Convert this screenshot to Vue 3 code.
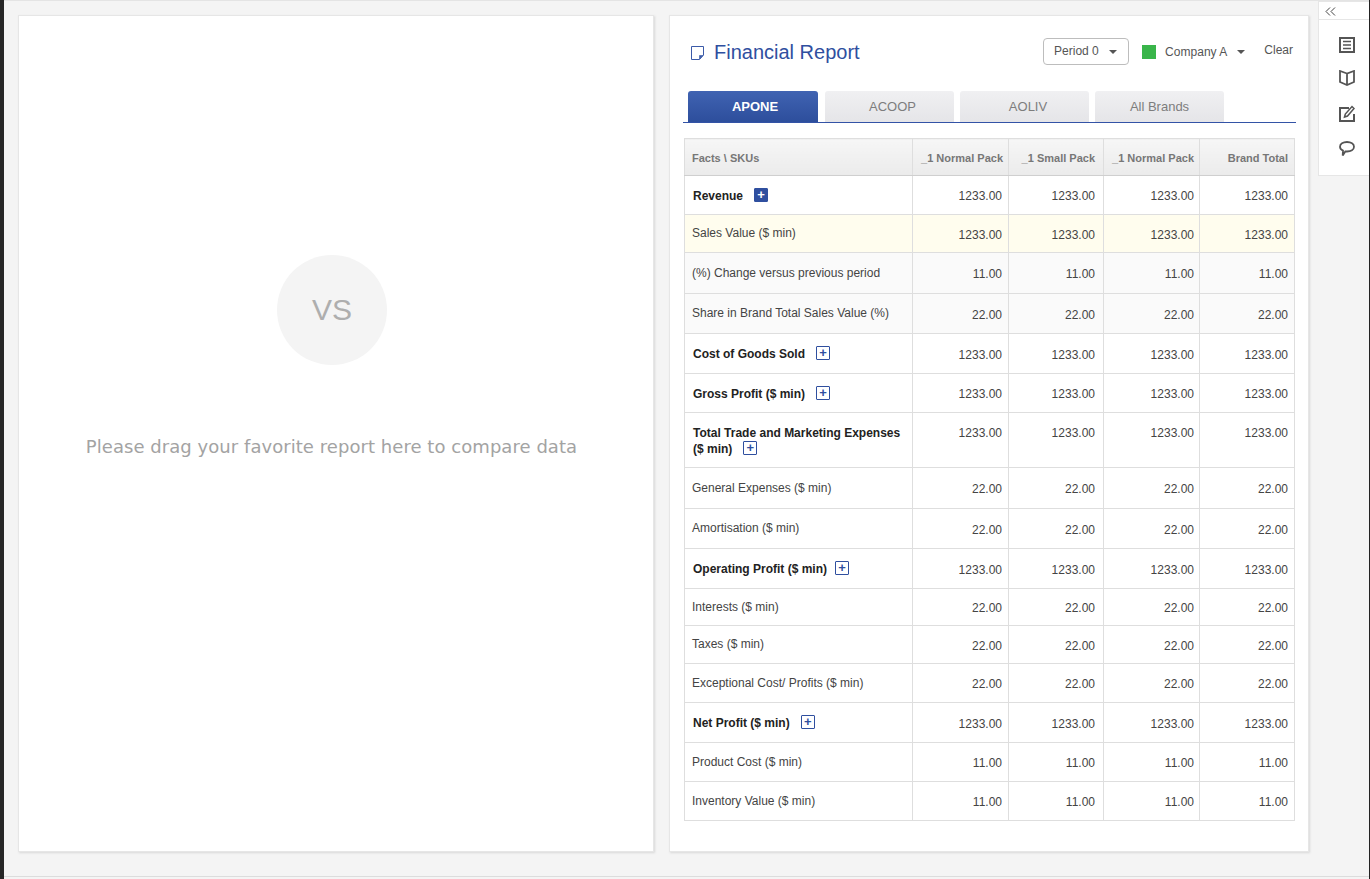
<script setup>
const cols = ['_1 Normal Pack', '_1 Small Pack', '_1 Normal Pack', 'Brand Total']
const tabs = ['APONE', 'ACOOP', 'AOLIV', 'All Brands']
const rows = [
  { label: 'Revenue', v: '1233.00', h: 39, bold: true, plus: 'solid' },
  { label: 'Sales Value ($ min)', v: '1233.00', h: 38, tone: 'hl' },
  { label: '(%) Change versus previous period', v: '11.00', h: 41, tone: 'soft' },
  { label: 'Share in Brand Total Sales Value (%)', v: '22.00', h: 40, tone: 'soft' },
  { label: 'Cost of Goods Sold', v: '1233.00', h: 40, bold: true, plus: 'line' },
  { label: 'Gross Profit ($ min)', v: '1233.00', h: 39, bold: true, plus: 'line' },
  { label: 'Total Trade and Marketing Expenses ($ min)', v: '1233.00', h: 55, bold: true, plus: 'line', top: true },
  { label: 'General Expenses ($ min)', v: '22.00', h: 41 },
  { label: 'Amortisation ($ min)', v: '22.00', h: 40 },
  { label: 'Operating Profit ($ min)', v: '1233.00', h: 40, bold: true, plus: 'line tight' },
  { label: 'Interests ($ min)', v: '22.00', h: 37 },
  { label: 'Taxes ($ min)', v: '22.00', h: 38 },
  { label: 'Exceptional Cost/ Profits ($ min)', v: '22.00', h: 39 },
  { label: 'Net Profit ($ min)', v: '1233.00', h: 40, bold: true, plus: 'line' },
  { label: 'Product Cost ($ min)', v: '11.00', h: 39 },
  { label: 'Inventory Value ($ min)', v: '11.00', h: 39 }
]
</script>

<template>
  <div class="page">
    <section class="card compare">
      <div class="vs">VS</div>
      <p class="hint">Please drag your favorite report here to compare data</p>
    </section>

    <section class="card report">
      <header class="head">
        <svg class="doc" width="13" height="14" viewBox="0 0 13 14" fill="none" stroke="#3b5aa8" stroke-width="1">
          <path d="M.5.500h12v8.500l-4 4.500H.5z" />
          <path d="M12 9.500H8.500V13z" fill="#3b5aa8" stroke-width="0.6" />
        </svg>
        <h1>Financial Report</h1>
        <div class="filters">
          <div class="select">Period 0<i class="caret"></i></div>
          <span class="swatch"></span>
          <div class="company">Company A<i class="caret"></i></div>
          <a class="clear">Clear</a>
        </div>
      </header>

      <nav class="tabs">
        <button v-for="(t, i) in tabs" :key="t" class="tab" :class="{ active: i === 0 }">{{ t }}</button>
      </nav>

      <table class="grid">
        <colgroup>
          <col class="c0" /><col class="c1" /><col class="c2" /><col class="c3" /><col class="c4" />
        </colgroup>
        <thead>
          <tr>
            <th class="first">Facts \ SKUs</th>
            <th v-for="(c, i) in cols" :key="i">{{ c }}</th>
          </tr>
        </thead>
        <tbody>
          <tr v-for="r in rows" :key="r.label" :class="r.tone" :style="{ height: r.h + 'px' }">
            <td class="name" :class="{ bold: r.bold }">
              {{ r.label }}<span v-if="r.plus" class="plus" :class="r.plus">+</span>
            </td>
            <td v-for="n in 4" :key="n" class="num" :class="{ top: r.top }">{{ r.v }}</td>
          </tr>
        </tbody>
      </table>
    </section>

    <aside class="side">
      <div class="collapse">
        <svg width="11" height="9" viewBox="0 0 11 9" fill="none" stroke="#444" stroke-width="1">
          <path d="M5 .5 1 4.500 5 8.500M10 .5 6 4.500 10 8.500" />
        </svg>
      </div>
      <div class="tools">
        <svg width="16" height="16" viewBox="0 0 16 16" fill="none" stroke="#555">
          <path stroke-width="2" d="M1 1h14v14H1z" />
          <path stroke-width="1.400" d="M4 4.500h8M4 8h8M4 11.500h8" />
        </svg>
        <svg width="16" height="16" viewBox="0 0 16 16" fill="none" stroke="#555" stroke-width="1.800">
          <path d="M8 3.500 1 1v11l7 3 7-3V1zM8 3.500V15" />
        </svg>
        <svg width="16" height="17" viewBox="0 0 16 17" fill="none" stroke="#555">
          <path stroke-width="2" d="M15 9v7H1V3h9" />
          <path stroke-width="1.500" d="m5.500 12 .8-3L13 1.500l2 2L8.500 11z" />
        </svg>
        <svg width="16" height="16" viewBox="0 0 16 16" fill="none" stroke="#555" stroke-width="1.800">
          <path d="M8 1c3.900 0 7 2 7 4.800s-3.100 4.700-7 4.700c-.6 0-1.200 0-1.700-.1L3.700 14.500l.3-4.900C2.200 8.800 1 7.500 1 5.800 1 3 4.100 1 8 1z" />
        </svg>
      </div>
    </aside>
  </div>
</template>

<style>
html, body { margin: 0; background: #f4f4f4; }
</style>

<style scoped>
.page {
  box-sizing: border-box;
  width: 1370px;
  height: 879px;
  overflow: hidden;
  display: flex;
  align-items: flex-start;
  padding: 15px 0 0 14px;
  border-left: 4px solid #262626;
  border-right: 1px solid #222;
  font-family: "Liberation Sans", Arial, sans-serif;
  color: #333;
  background-color: #f4f4f4;
  background-image:
    linear-gradient(#e4e4e4, #e4e4e4),
    linear-gradient(#dcdcdc, #dcdcdc);
  background-repeat: no-repeat;
  background-size: 100% 1px, 100% 1px;
  background-position: 0 0, 0 876px;
}
.card {
  box-sizing: border-box;
  flex: none;
  height: 837px;
  background: #fff;
  border: 1px solid #e6e6e6;
  box-shadow: 1px 1px 2px #d8d8d8;
}
.compare {
  width: 636px;
  display: flex;
  flex-direction: column;
  align-items: center;
  padding-top: 239px;
}
.vs {
  width: 110px;
  height: 110px;
  margin-right: 8px;
  border-radius: 50%;
  background: #f4f4f4;
  color: #aeaeae;
  font-size: 30px;
  line-height: 110px;
  text-align: center;
}
.hint {
  margin: 71px 0 0 -9px;
  font-family: "DejaVu Sans", Verdana, sans-serif;
  font-size: 18px;
  letter-spacing: 0.05px;
  line-height: 22px;
  color: #a3a3a3;
  white-space: nowrap;
}
.report {
  width: 640px;
  margin-left: 15px;
  padding: 0 13px 0 14px;
}
.head {
  display: flex;
  align-items: flex-start;
  height: 75px;
  padding-left: 7px;
}
.doc { margin: 30px 10px 0 0; }
h1 {
  margin: 23px 0 0;
  font-size: 20px;
  line-height: 26px;
  font-weight: 400;
  color: #2f4f9f;
}
.filters {
  margin-left: auto;
  margin-right: 2px;
  display: flex;
  align-items: flex-start;
  font-size: 12px;
  color: #555;
  padding-top: 22px;
}
.select {
  box-sizing: border-box;
  width: 86px;
  height: 27px;
  border: 1px solid #bdbdbd;
  border-radius: 4px;
  padding-left: 10px;
  line-height: 25px;
  display: flex;
  align-items: center;
}
.caret {
  width: 0;
  height: 0;
  border-left: 4px solid transparent;
  border-right: 4px solid transparent;
  border-top: 4px solid #555;
  margin-left: 10px;
  margin-top: 1px;
}
.swatch {
  width: 14px;
  height: 14px;
  margin: 7px 0 0 13px;
  background: #39b54a;
}
.company {
  display: flex;
  align-items: center;
  height: 27px;
  margin-left: 9px;
  letter-spacing: 0.02px;
}
.company .caret { margin-left: 10px; }
.clear {
  margin-left: 19px;
  line-height: 26px;
  margin-top: -1px;
  color: #555;
}
.tabs {
  display: flex;
  gap: 6px;
  height: 32px;
  box-sizing: border-box;
  padding-left: 5px;
  border-bottom: 1px solid #3353a6;
  margin: 0 -1px;
}
.tab {
  width: 129px;
  height: 31px;
  border: 0;
  padding: 1px 0 0;
  border-radius: 3px 3px 0 0;
  background: linear-gradient(#f0f0f2, #e5e5e8);
  color: #7d7d7d;
  font: 13px/30px "Liberation Sans", Arial, sans-serif;
}
.tab:nth-child(1) { padding-left: 4px; }
.tab:nth-child(2) { padding-left: 6px; }
.tab:nth-child(3) { padding-left: 7px; }
.tab.active {
  width: 130px;
  margin-right: 1px;
  background: linear-gradient(#4063b2, #2d4e9c);
  color: #fff;
  font-weight: 700;
}
.grid {
  box-sizing: border-box;
  table-layout: fixed;
  border-collapse: collapse;
  width: 611px;
  margin: 15px 0 0;
  font-size: 12px;
}
.c0 { width: 228px; }
.c1 { width: 96px; }
.c2 { width: 95px; }
.c3 { width: 96px; }
.c4 { width: 95px; }
th, td {
  border: 1px solid #dedede;
  padding: 0 6px 0 7px;
}
th:nth-child(3), td:nth-child(3) { padding-right: 8px; }
th:nth-child(4), td:nth-child(4) { padding-right: 5px; }
thead tr { height: 37px; }
th {
  background: linear-gradient(#f6f6f6, #ebebeb);
  border-bottom-color: #cfcfcf;
  color: #777;
  font-size: 11px;
  text-align: right;
  white-space: nowrap;
  padding-top: 1px;
}
th:nth-child(2) { padding-right: 5px; }
th.first { text-align: left; }
.name {
  color: #444;
  line-height: 16px;
  padding-bottom: 1px;
}
.name.bold {
  color: #222;
  font-weight: 700;
  padding-left: 8px;
  padding-right: 4px;
  padding-top: 2px;
}
.num {
  text-align: right;
  color: #444;
  padding-top: 2px;
}
.num.top {
  vertical-align: top;
  padding-top: 13px;
}
.name.bold:has(+ .top) {
  vertical-align: top;
  padding-top: 12px;
}
.hl td { background: #fffdee; }
.soft td { background: #fafafa; }
.plus {
  box-sizing: border-box;
  display: inline-block;
  width: 14px;
  height: 14px;
  margin-left: 11px;
  border: 1px solid #2f4f9f;
  border-radius: 1px;
  color: #2f4f9f;
  font-size: 13px;
  font-weight: 700;
  line-height: 11px;
  text-align: center;
  vertical-align: 1px;
}
.plus.tight { margin-left: 8px; }
.plus.solid {
  background: #2f4f9f;
  color: #fff;
}
.side {
  box-sizing: border-box;
  flex: none;
  width: 51px;
  height: 175px;
  margin: -14px 0 0 9px;
  background: #fff;
  border: 1px solid #e6e6e6;
  border-right: 0;
}
.collapse {
  height: 18px;
  padding: 5px 0 0 6px;
  box-sizing: border-box;
  line-height: 0;
  border-bottom: 1px solid #e6e6e6;
}
.tools {
  display: flex;
  flex-direction: column;
  gap: 17px;
  padding: 17px 0 0 20px;
}
.tools svg:nth-child(3), .tools svg:nth-child(4) { margin-top: 2px; }
</style>
